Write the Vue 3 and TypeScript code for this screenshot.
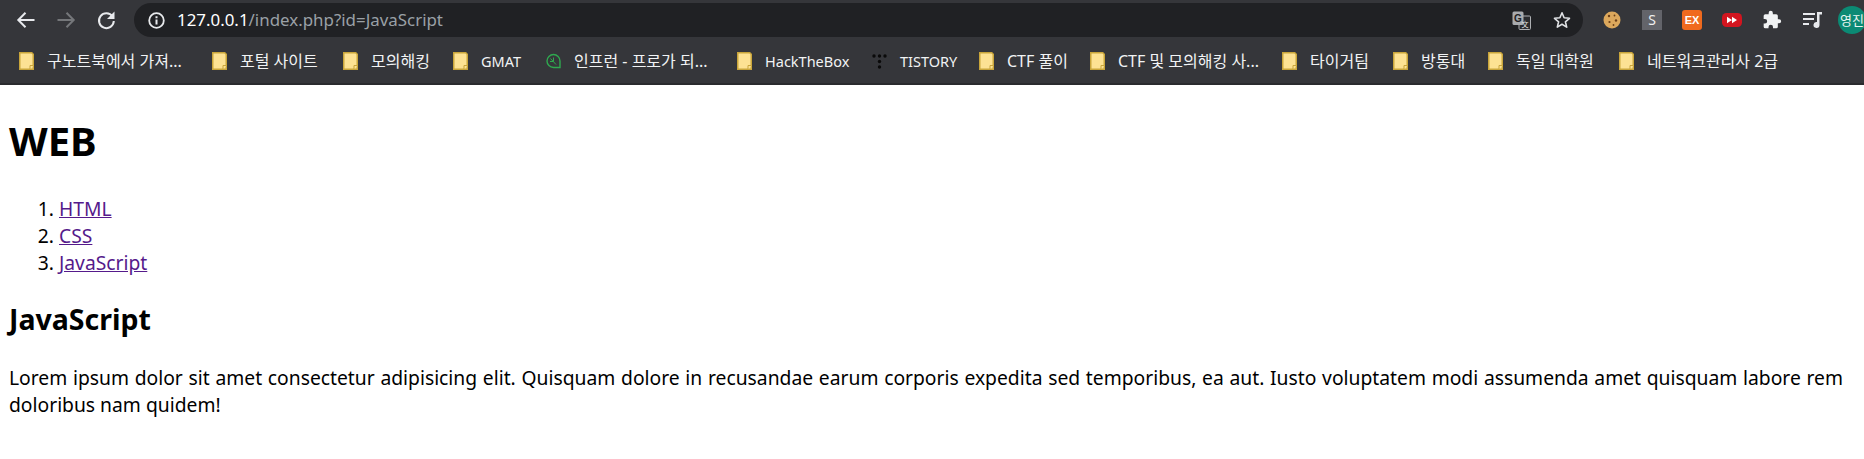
<script setup lang="ts">
interface Mark { label: string; w: number; kind: 'folder' | 'leaf' | 'dots'; latin?: boolean }
const marks: Mark[] = [
  { label: '구노트북에서 가져...', w: 193, kind: 'folder' },
  { label: '포털 사이트', w: 131, kind: 'folder' },
  { label: '모의해킹', w: 110, kind: 'folder' },
  { label: 'GMAT', w: 93, kind: 'folder', latin: true },
  { label: '인프런 - 프로가 되...', w: 191, kind: 'leaf' },
  { label: 'HackTheBox', w: 135, kind: 'folder', latin: true },
  { label: 'TISTORY', w: 107, kind: 'dots', latin: true },
  { label: 'CTF 풀이', w: 111, kind: 'folder' },
  { label: 'CTF 및 모의해킹 사...', w: 192, kind: 'folder' },
  { label: '타이거팀', w: 111, kind: 'folder' },
  { label: '방통대', w: 95, kind: 'folder' },
  { label: '독일 대학원', w: 131, kind: 'folder' },
  { label: '네트워크관리사 2급', w: 180, kind: 'folder' }
]
const links = ['HTML', 'CSS', 'JavaScript']
</script>

<template>
  <div class="page">
    <header class="chrome">
      <div class="toolbar">
        <svg class="nav" width="24" height="24" viewBox="0 0 24 24"><path d="M20.500 12H5M11.500 4.800 4.300 12l7.200 7.200" fill="none" stroke="#e8eaed" stroke-width="2"/></svg>
        <svg class="nav" width="24" height="24" viewBox="0 0 24 24"><path d="M3.500 12H19M12.500 4.800 19.700 12l-7.200 7.200" fill="none" stroke="#75777a" stroke-width="2"/></svg>
        <svg class="nav" width="24" height="24" viewBox="0 0 24 24"><path d="M18.500 8.500A7.400 7.400 0 1 0 19.800 13" fill="none" stroke="#e8eaed" stroke-width="2"/><path d="M20.500 3.500v7.500H13z" fill="#e8eaed"/></svg>
        <div class="omnibox">
          <svg class="info" width="17" height="17" viewBox="0 0 17 17"><circle cx="8.500" cy="8.500" r="7.300" fill="none" stroke="#e8eaed" stroke-width="1.800"/><path d="M7.500 7.500h2v5h-2zM7.500 4.300h2v2h-2z" fill="#e8eaed"/></svg>
          <span class="url"><span class="host">127.0.0.1</span>/index.php?id=JavaScript</span>
          <span class="spacer"></span>
          <svg class="translate" width="19" height="19" viewBox="0 0 19 19"><rect x="7" y="5" width="11.500" height="13.500" rx="1" fill="#2a2b2e" stroke="#aeb0b3"/><rect x="0.500" y="0.500" width="11" height="13.500" rx="1.500" fill="#a9abae"/><text x="6" y="11" class="g">G</text><text x="13" y="15.500" class="x">文</text></svg>
          <svg class="star" width="18" height="18" viewBox="0 0 18 18"><path d="M9 1.800l2.100 5 5.400.5-4.100 3.500 1.300 5.300L9 13.300l-4.700 2.800 1.300-5.300-4.100-3.500 5.400-.5z" fill="none" stroke="#e0e2e5" stroke-width="1.600" stroke-linejoin="round"/></svg>
        </div>
        <div class="exts">
          <span class="cell"><svg width="18" height="18" viewBox="0 0 18 18"><circle cx="9" cy="9" r="8.500" fill="#dca85c"/><circle cx="6" cy="5" r="1.200" fill="#6b3f18"/><circle cx="11.500" cy="4.500" r=".9" fill="#6b3f18"/><circle cx="13" cy="9.500" r="1.200" fill="#6b3f18"/><circle cx="6.500" cy="11" r="1.100" fill="#6b3f18"/><circle cx="10.500" cy="14" r=".9" fill="#6b3f18"/></svg></span>
          <span class="cell"><span class="ext-s">S</span></span>
          <span class="cell"><span class="ext-ex">EX</span></span>
          <span class="cell"><svg width="20" height="16" viewBox="0 0 20 16"><rect x="0" y="1" width="20" height="14" rx="4.500" fill="#d3151f"/><path d="M5 4.800 10 8l-5 3.200zM10 4.800 15 8l-5 3.200z" fill="#fff"/></svg></span>
          <span class="cell"><svg width="20" height="20" viewBox="0 0 24 24"><path d="M20.500 11H19V7a2 2 0 0 0-2-2h-4V3.500a2.500 2.500 0 0 0-5 0V5H4a2 2 0 0 0-2 2v3.800h1.500a2.700 2.700 0 0 1 0 5.400H2V20a2 2 0 0 0 2 2h3.800v-1.500a2.700 2.700 0 0 1 5.400 0V22H17a2 2 0 0 0 2-2v-4h1.500a2.500 2.500 0 0 0 0-5z" fill="#f1f3f4"/></svg></span>
          <span class="cell"><svg width="19" height="18" viewBox="0 0 19 18"><path d="M0 2h12v2H0zM0 7h11v2H0zM0 12h6v2H0z" fill="#e8eaed"/><path d="M14 1h5v2.500h-2.500v10.500a3 3 0 1 1-2.500-3z" fill="#e8eaed"/></svg></span>
          <span class="cell"><span class="avatar">영진</span></span>
        </div>
      </div>
      <nav class="bookmarks">
        <div v-for="m in marks" :key="m.label" class="mark" :style="{ width: m.w + 'px' }">
          <svg v-if="m.kind === 'folder'" class="mark-icon" width="15" height="18" viewBox="0 0 15 18"><path d="M.75.750h12l1.500 1.500v15h-13.500z" fill="#fde293" stroke="#c9a53a" stroke-width="1.500"/><path d="M11 17v-3.500h3.500" fill="#fde293" stroke="#c9a53a"/></svg>
          <svg v-else-if="m.kind === 'leaf'" class="mark-icon" width="15" height="18" viewBox="0 0 15 18"><path d="M7.500 2.500a6.500 6.500 0 1 0 0 13h6.500V9a6.500 6.500 0 0 0-6.500-6.500z" fill="none" stroke="#2fa84f" stroke-width="1.400"/><path d="M4.500 6.500 10 12.500M7.500 9V5.500M7.500 9.500H4" fill="none" stroke="#2fa84f"/></svg>
          <svg v-else class="mark-icon" width="15" height="18" viewBox="0 0 15 18"><g fill="#0a0a0a"><circle cx="2" cy="4" r="1.700"/><circle cx="7.500" cy="4" r="1.700"/><circle cx="13" cy="4" r="1.700"/><circle cx="7.500" cy="9.500" r="1.700"/><circle cx="7.500" cy="15" r="1.700"/></g></svg>
          <span class="mark-label" :class="{ latin: m.latin }">{{ m.label }}</span>
        </div>
      </nav>
    </header>
    <main class="doc">
      <h1>WEB</h1>
      <ol>
        <li v-for="l in links" :key="l"><a href="#">{{ l }}</a></li>
      </ol>
      <h2>JavaScript</h2>
      <p><span class="full">Lorem ipsum dolor sit amet consectetur adipisicing elit. Quisquam dolore in recusandae earum corporis expedita sed temporibus, ea aut. Iusto voluptatem modi assumenda amet quisquam labore rem</span> doloribus nam quidem!</p>
    </main>
  </div>
</template>

<style>
html, body { margin: 0; background: #fff; overflow: hidden; }
</style>

<style scoped>
.page { width: 1864px; height: 459px; overflow: hidden; font-family: "Noto Sans", "Noto Sans CJK KR", sans-serif; color: #000; }
.chrome { background: #35363a; height: 85px; border-bottom: 2px solid #2a2b2e; box-sizing: border-box; }
.toolbar { height: 38px; padding: 2px 0 0 14px; box-sizing: border-box; display: flex; align-items: center; }
.nav { margin-right: 16px; flex: none; }
.omnibox { width: 1449px; height: 34px; flex: none; background: #202124; border-radius: 17px; display: flex; align-items: center; padding: 0 12px 0 14px; box-sizing: border-box; }
.info { margin-right: 12px; flex: none; }
.url { font-size: 16.900px; line-height: 20px; color: #9aa0a6; white-space: nowrap; }
.host { color: #fff; }
.spacer { flex: 1; }
.g { font: bold 10px "Liberation Sans", sans-serif; fill: #202124; text-anchor: middle; }
.x { font: 7px "Noto Sans CJK KR", sans-serif; fill: #e0e0e0; text-anchor: middle; }
.translate { margin-right: 22px; flex: none; }
.exts { display: flex; margin-left: 9px; flex: none; }
.cell { width: 40px; height: 36px; display: flex; align-items: center; justify-content: center; flex: none; }
.ext-s { width: 20px; height: 20px; background: #63646a; color: #f0f0f0; font-size: 14px; line-height: 20px; text-align: center; }
.ext-ex { width: 20px; height: 20px; background: #f06a1e; color: #fff; border-radius: 3px; font: bold 11px/20px "Liberation Sans", sans-serif; text-align: center; }
.avatar { width: 28px; height: 28px; flex: none; border-radius: 50%; background: #0b8a74; color: #e8f5f1; font-size: 13px; line-height: 28px; text-align: center; white-space: nowrap; overflow: hidden; }
.bookmarks { display: flex; height: 45px; padding-left: 19px; align-items: center; }
.mark { display: flex; align-items: center; flex: none; white-space: nowrap; }
.mark-icon { flex: none; margin-right: 13px; }
.mark-label { font-size: 16px; line-height: 18px; color: #f1f3f4; }
.mark-label.latin { font-size: 14.500px; }
.doc { padding: 0 21px 0 9px; }
h1 { margin: 0; padding-top: 31px; font-size: 40px; line-height: 50px; font-weight: 700; }
ol { margin: 29px 0 0; padding: 0 0 0 50px; font-size: 19.300px; line-height: 27px; }
a { color: #551a8b; }
h2 { margin: 25px 0 0; font-size: 28.500px; line-height: 37px; font-weight: 700; }
p { margin: 26px 0 0; font-size: 19.300px; line-height: 27px; }
.full { display: block; text-align: justify; text-align-last: justify; }
</style>
